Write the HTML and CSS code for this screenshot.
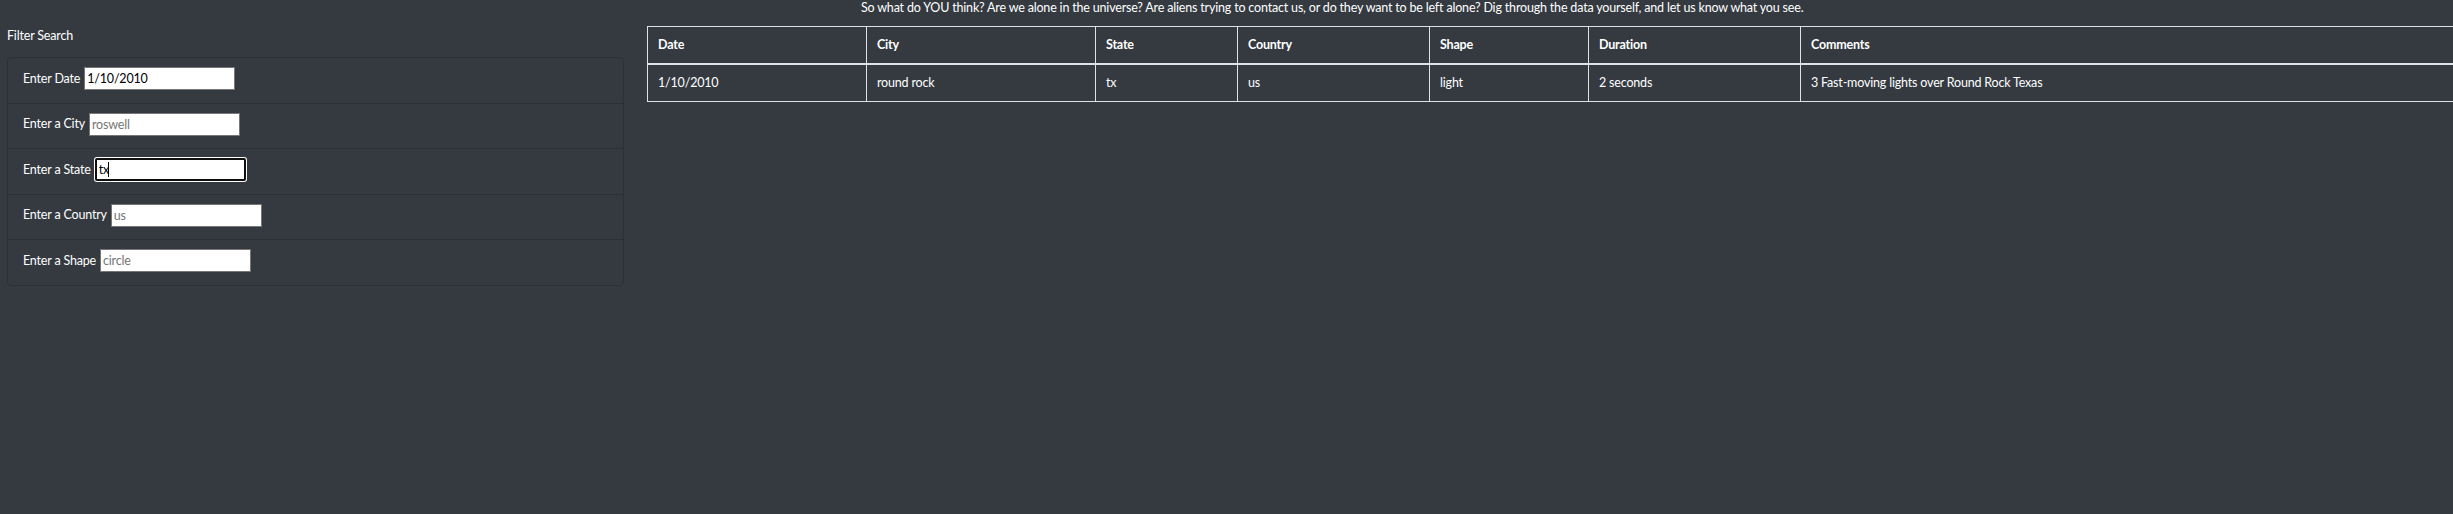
FILE: index.html
```html
<!DOCTYPE html>
<html lang="en">
<head>
<meta charset="utf-8">
<title>UFO Sightings</title>
<link rel="stylesheet" href="styles.css">
</head>
<body>
<div class="page">
  <aside class="filters">
    <h2 class="filters-title">Filter Search</h2>
    <ul class="filter-list">
      <li class="filter-item"><label class="filter-label">Enter Date <input class="filter-input" type="text" value="1/10/2010"></label></li>
      <li class="filter-item"><label class="filter-label">Enter a City <input class="filter-input" type="text" placeholder="roswell"></label></li>
      <li class="filter-item"><label class="filter-label">Enter a State <span class="input-wrap"><input class="filter-input is-focused" type="text" value="tx"><span class="caret"></span></span></label></li>
      <li class="filter-item"><label class="filter-label">Enter a Country <input class="filter-input" type="text" placeholder="us"></label></li>
      <li class="filter-item"><label class="filter-label">Enter a Shape <input class="filter-input" type="text" placeholder="circle"></label></li>
    </ul>
  </aside>
  <main class="results">
    <p class="intro">So what do YOU think? Are we alone in the universe? Are aliens trying to contact us, or do they want to be left alone? Dig through the data yourself, and let us know what you see.</p>
    <div class="table-wrap">
      <table class="ufo-table">
        <colgroup>
          <col class="c-date"><col class="c-city"><col class="c-state"><col class="c-country"><col class="c-shape"><col class="c-duration"><col class="c-comments">
        </colgroup>
        <thead>
          <tr><th>Date</th><th>City</th><th>State</th><th>Country</th><th>Shape</th><th>Duration</th><th>Comments</th></tr>
        </thead>
        <tbody>
          <tr><td>1/10/2010</td><td>round rock</td><td>tx</td><td>us</td><td>light</td><td>2 seconds</td><td>3 Fast-moving lights over Round Rock Texas</td></tr>
        </tbody>
      </table>
    </div>
  </main>
</div>
</body>
</html>
```
FILE: styles.css
```css
html, body {
  margin: 0;
  padding: 0;
}
body {
  background: #343a40;
  color: #fff;
  font-family: Lato, "Noto Sans", sans-serif;
  font-size: 12.5px;
  letter-spacing: -0.18px;
  line-height: 16px;
}
.page {
  display: flex;
  align-items: flex-start;
}
.filters {
  flex: 0 0 647px;
  box-sizing: border-box;
  padding: 28px 23px 0 7px;
}
.filters-title {
  margin: 0 0 13px;
  font-size: 12.5px;
  font-weight: normal;
  line-height: 16px;
}
.filter-list {
  list-style: none;
  margin: 0;
  padding: 0;
  border: 1px solid #2c3136;
  border-radius: 4px;
}
.filter-item {
  padding: 9px 15px 12.5px;
  border-bottom: 1px solid #2c3136;
}
.filter-item:last-child {
  border-bottom: 0;
}
.filter-label {
  display: flex;
  align-items: center;
  gap: 4px;
}
.filter-input {
  box-sizing: border-box;
  width: 151px;
  height: 23px;
  margin: 0;
  padding: 1px 2px;
  border: 1px solid #767676;
  background: #fff;
  color: #000;
  font-family: inherit;
  font-size: 12.5px;
  letter-spacing: inherit;
  outline: none;
}
.filter-input::placeholder {
  color: #757575;
}
.input-wrap {
  position: relative;
  display: inline-block;
  height: 23px;
}
.filter-input.is-focused {
  border: 2px solid #101010;
  border-radius: 2px;
  box-shadow: 0 0 0 1px #fff;
}
.caret {
  position: absolute;
  left: 13px;
  top: 4px;
  width: 1px;
  height: 15px;
  background: #000;
}
.results {
  flex: 1 1 auto;
  min-width: 0;
}
.intro {
  margin: 0 0 10px;
  padding-left: 214px;
  line-height: 16px;
}
.table-wrap {
  overflow: hidden;
}
.ufo-table {
  width: calc(100% + 2px);
  table-layout: fixed;
  border-collapse: collapse;
  color: #fff;
}
.ufo-table th,
.ufo-table td {
  border: 1px solid #dee2e6;
  padding: 10px;
  text-align: left;
  line-height: 16px;
}
.ufo-table th {
  font-weight: bold;
  border-bottom-width: 2px;
}
.c-date { width: 219px; }
.c-city { width: 229px; }
.c-state { width: 142px; }
.c-country { width: 192px; }
.c-shape { width: 159px; }
.c-duration { width: 212px; }
```
